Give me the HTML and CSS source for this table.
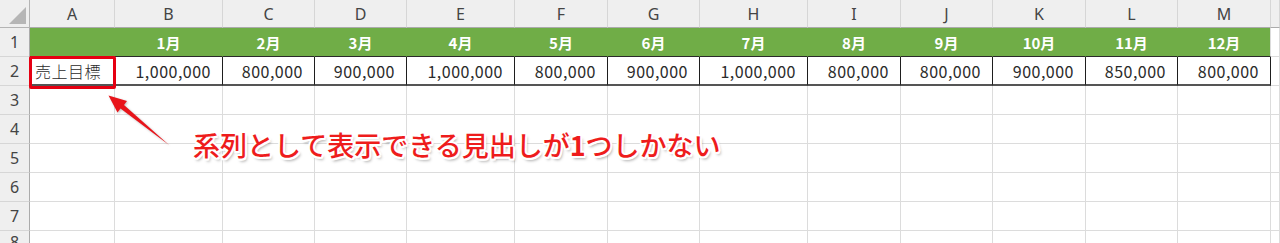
FILE: index.html
```html
<!DOCTYPE html>
<html lang="ja">
<head>
<meta charset="utf-8">
<link rel="stylesheet" href="styles.css">
</head>
<body>
<div class="sheet">
  <div class="grid">
    <div class="corner"><span class="tri"></span></div>
    <div class="ch">A</div><div class="ch">B</div><div class="ch">C</div><div class="ch">D</div><div class="ch">E</div><div class="ch">F</div><div class="ch">G</div><div class="ch">H</div><div class="ch">I</div><div class="ch">J</div><div class="ch">K</div><div class="ch">L</div><div class="ch">M</div><div class="ch"></div>

    <div class="rh">1</div>
    <div class="c g"></div><div class="c g">1月</div><div class="c g">2月</div><div class="c g">3月</div><div class="c g">4月</div><div class="c g">5月</div><div class="c g">6月</div><div class="c g">7月</div><div class="c g">8月</div><div class="c g">9月</div><div class="c g">10月</div><div class="c g">11月</div><div class="c g last">12月</div><div class="c"></div>

    <div class="rh">2</div>
    <div class="c d t">売上目標</div><div class="c d n">1,000,000</div><div class="c d n">800,000</div><div class="c d n">900,000</div><div class="c d n">1,000,000</div><div class="c d n">800,000</div><div class="c d n">900,000</div><div class="c d n">1,000,000</div><div class="c d n">800,000</div><div class="c d n">800,000</div><div class="c d n">900,000</div><div class="c d n">850,000</div><div class="c d n">800,000</div><div class="c"></div>

    <div class="rh">3</div>
    <div class="c"></div><div class="c"></div><div class="c"></div><div class="c"></div><div class="c"></div><div class="c"></div><div class="c"></div><div class="c"></div><div class="c"></div><div class="c"></div><div class="c"></div><div class="c"></div><div class="c"></div><div class="c"></div>

    <div class="rh">4</div>
    <div class="c"></div><div class="c"></div><div class="c"></div><div class="c"></div><div class="c"></div><div class="c"></div><div class="c"></div><div class="c"></div><div class="c"></div><div class="c"></div><div class="c"></div><div class="c"></div><div class="c"></div><div class="c"></div>

    <div class="rh">5</div>
    <div class="c"></div><div class="c"></div><div class="c"></div><div class="c"></div><div class="c"></div><div class="c"></div><div class="c"></div><div class="c"></div><div class="c"></div><div class="c"></div><div class="c"></div><div class="c"></div><div class="c"></div><div class="c"></div>

    <div class="rh">6</div>
    <div class="c"></div><div class="c"></div><div class="c"></div><div class="c"></div><div class="c"></div><div class="c"></div><div class="c"></div><div class="c"></div><div class="c"></div><div class="c"></div><div class="c"></div><div class="c"></div><div class="c"></div><div class="c"></div>

    <div class="rh">7</div>
    <div class="c"></div><div class="c"></div><div class="c"></div><div class="c"></div><div class="c"></div><div class="c"></div><div class="c"></div><div class="c"></div><div class="c"></div><div class="c"></div><div class="c"></div><div class="c"></div><div class="c"></div><div class="c"></div>

    <div class="rh">8</div>
    <div class="c"></div><div class="c"></div><div class="c"></div><div class="c"></div><div class="c"></div><div class="c"></div><div class="c"></div><div class="c"></div><div class="c"></div><div class="c"></div><div class="c"></div><div class="c"></div><div class="c"></div><div class="c"></div>
  </div>

  <div class="hilite"></div>
  <svg class="arrow" width="1280" height="243" viewBox="0 0 1280 243">
    <polygon points="108.5,95.5 127,101 124,105 169,145 120.5,108.5 117.5,112.5" fill="#e8141a"/>
  </svg>
  <div class="note">系列として表示できる見出しが<b>1</b>つしかない</div>
</div>
</body>
</html>
```

FILE: styles.css
```css
html, body {
  margin: 0;
  padding: 0;
  background: #ffffff;
  overflow: hidden;
}

.sheet {
  position: relative;
  width: 1280px;
  height: 243px;
  overflow: hidden;
  font-family: "Noto Sans CJK JP", "Noto Sans", sans-serif;
}

.grid {
  display: grid;
  grid-template-columns: 30px 85px 108px 92px 92px 108px 93px 92px 108px 93px 92px 93px 92px 93px 9px;
  grid-template-rows: 28px repeat(7, 29px);
}

.grid > div {
  box-sizing: border-box;
  display: flex;
  align-items: center;
  overflow: hidden;
  white-space: nowrap;
}

.corner {
  position: relative;
  background: #efefef;
  border-right: 1px solid #b4b4b4;
  border-bottom: 1px solid #b4b4b4;
}

.tri {
  position: absolute;
  right: 3px;
  bottom: 3px;
  width: 0;
  height: 0;
  border-left: 17px solid transparent;
  border-bottom: 17px solid #b6b6b6;
}

.ch {
  justify-content: center;
  background: #efefef;
  border-right: 1px solid #d6d6d6;
  border-bottom: 1px solid #ababab;
  color: #444444;
  font-family: "Noto Sans", sans-serif;
  font-size: 16px;
  padding-top: 1px;
}

.rh {
  justify-content: center;
  background: #efefef;
  border-right: 1px solid #ababab;
  border-bottom: 1px solid #d6d6d6;
  color: #444444;
  font-family: "Noto Sans", sans-serif;
  font-size: 16px;
}

.c {
  border-right: 1px solid #dcdcdc;
  border-bottom: 1px solid #dcdcdc;
  font-size: 16px;
  color: #2b2b2b;
}

.c.g {
  justify-content: center;
  background: #70ad47;
  color: #ffffff;
  font-weight: 700;
  font-size: 15px;
  border-right-color: #70ad47;
  border-bottom: 1px solid #2a2a2a;
}

.c.g.last {
  border-right-color: #dcdcdc;
}

.c.d {
  border-right: 1px solid #1e1e1e;
  border-bottom: 2px solid #555555;
}

.c.t {
  padding-left: 5px;
  letter-spacing: 0.5px;
  font-weight: 300;
}

.c.n {
  justify-content: flex-end;
  padding-right: 11px;
  letter-spacing: 0.5px;
}

.hilite {
  position: absolute;
  left: 29px;
  top: 56px;
  width: 87px;
  height: 33px;
  box-sizing: border-box;
  border: 3px solid #e60012;
  border-radius: 2px;
}

.arrow {
  position: absolute;
  left: 0;
  top: 0;
  filter: drop-shadow(1px 1px 1px rgba(0, 0, 0, 0.25));
}

.note {
  position: absolute;
  left: 193px;
  top: 130px;
  font-size: 27px;
  line-height: 30px;
  font-weight: 500;
  color: #ee1c1c;
  white-space: nowrap;
  text-shadow:
    2px 0 0 #fff, -2px 0 0 #fff, 0 2px 0 #fff, 0 -2px 0 #fff,
    1.5px 1.5px 0 #fff, -1.5px 1.5px 0 #fff, 1.5px -1.5px 0 #fff, -1.5px -1.5px 0 #fff,
    2px 3px 3px rgba(0, 0, 0, 0.35);
}

.note b {
  font-weight: 700;
}
```
